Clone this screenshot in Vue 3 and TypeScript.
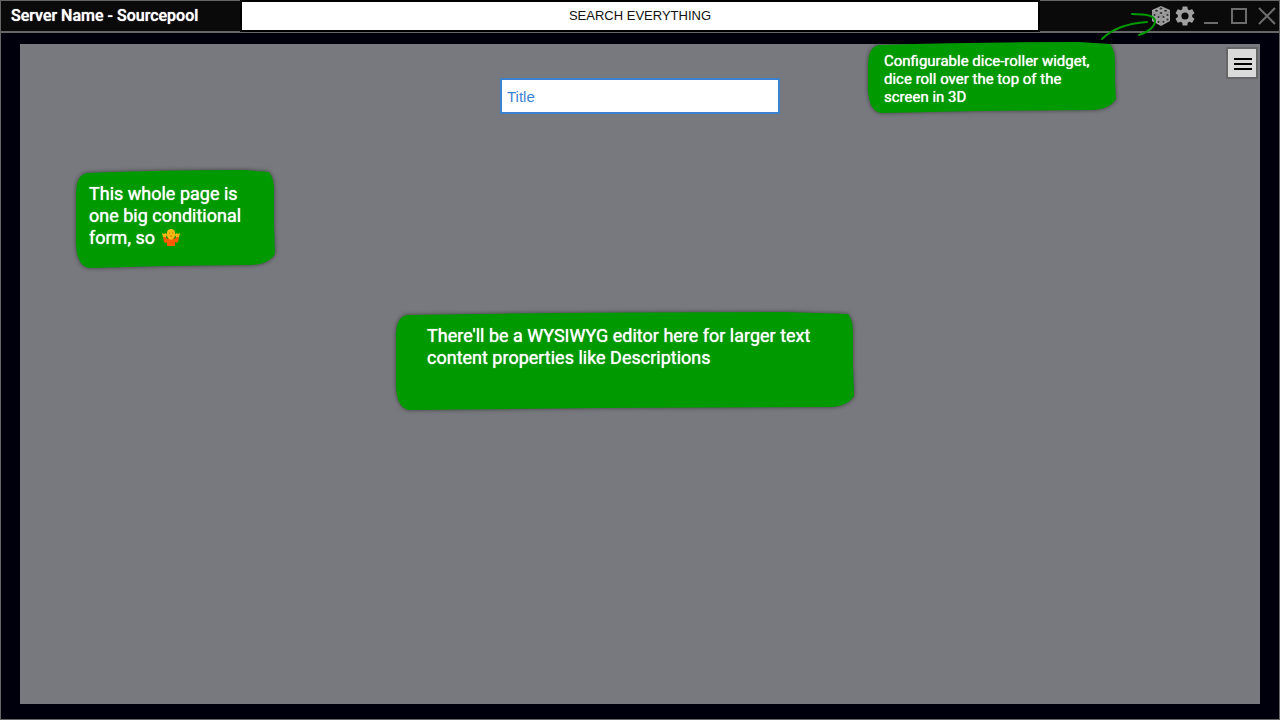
<script setup lang="ts">
import { ref } from 'vue'

interface Note {
  id: string
  text: string
  width: number
  height: number
  shrug?: boolean
}

const query = ref('')
const title = ref('')

const notes: Note[] = [
  { id: 'dice', text: 'Configurable dice-roller widget, dice roll over the top of the screen in 3D', width: 249, height: 71 },
  { id: 'form', text: 'This whole page is one big conditional form, so', width: 200, height: 98, shrug: true },
  { id: 'editor', text: "There'll be a WYSIWYG editor here for larger text content properties like Descriptions", width: 459, height: 98 },
]

// Hand-cut paper outline whose corners keep their size at any width.
function outline(w: number, h: number): string {
  return `M1 24 Q1 4 13 3 Q${w * 0.4} 0 ${w * 0.85} 0 L${w - 6} 2 Q${w - 1} 8 ${w - 1} 20 L${w - 1} ${h * 0.55} L${w} ${h - 14} Q${w - 7} ${h - 3} ${w - 25} ${h - 3} L${w * 0.45} ${h - 2} L16 ${h} Q2 ${h} 1 ${h - 24} Z`
}
</script>

<template>
  <div class="window">
    <header class="bar">
      <h1 class="name">Server Name - Sourcepool</h1>
      <input v-model="query" class="search" type="text" aria-label="Search everything" placeholder="SEARCH EVERYTHING" />
      <nav class="tools" aria-label="Window controls">
        <button class="tool" type="button" aria-label="Dice roller">
          <svg viewBox="0 0 20 20">
            <path d="M10 0 L19 4 V15 L10 20 L1 15 V4 Z" fill="#a0a0a0" />
            <path d="M1 6 L10 10 L19 6 M10 10 V19" fill="none" stroke="#8a8a8a" />
            <g fill="#333">
              <ellipse cx="10" cy="2.500" rx="1.500" ry="1" /><ellipse cx="5.500" cy="4.800" rx="1.500" ry="1" />
              <ellipse cx="10" cy="7" rx="1.500" ry="1" /><ellipse cx="14.500" cy="4.800" rx="1.500" ry="1" />
              <circle cx="3.500" cy="9" r="1.100" /><circle cx="7.500" cy="11" r="1.100" /><circle cx="3.500" cy="13.500" r="1.100" /><circle cx="7.500" cy="15.800" r="1.100" />
              <circle cx="16.500" cy="9" r="1.100" /><circle cx="12.500" cy="11" r="1.100" /><circle cx="16.500" cy="13.500" r="1.100" /><circle cx="12.500" cy="15.800" r="1.100" />
            </g>
          </svg>
        </button>
        <button class="tool" type="button" aria-label="Settings">
          <svg viewBox="2 2 20 20">
            <path fill="#a0a0a0" d="M19.140 12.940c.040-.300.060-.610.060-.940s-.020-.640-.070-.940l2.030-1.580c.180-.140.230-.410.120-.610l-1.920-3.320c-.120-.220-.370-.290-.590-.220l-2.390.960c-.500-.380-1.030-.700-1.620-.940L14.400 2.810c-.040-.240-.240-.410-.480-.410h-3.840c-.240 0-.430.170-.470.410L9.250 5.350c-.590.240-1.130.570-1.620.940L5.240 5.330c-.220-.080-.470 0-.590.220L2.740 8.870c-.120.210-.080.470.120.610l2.030 1.580c-.050.300-.090.630-.090.940s.020.640.070.940l-2.030 1.580c-.180.140-.230.410-.120.610l1.920 3.320c.120.220.370.290.590.220l2.390-.960c.500.380 1.030.700 1.620.940l.360 2.540c.050.240.240.410.480.410h3.840c.240 0 .440-.170.470-.410l.360-2.540c.590-.240 1.130-.560 1.620-.940l2.390.960c.220.080.470 0 .590-.220l1.920-3.320c.120-.220.070-.470-.120-.610zM12 15.600A3.600 3.600 0 1 1 12 8.400a3.600 3.600 0 0 1 0 7.200z" />
          </svg>
        </button>
        <button class="control" type="button" aria-label="Minimize">
          <svg viewBox="0 0 18 18"><path d="M2 16H16" /></svg>
        </button>
        <button class="control" type="button" aria-label="Maximize">
          <svg viewBox="0 0 18 18"><path d="M2 2H16V16H2Z" /></svg>
        </button>
        <button class="control" type="button" aria-label="Close">
          <svg viewBox="0 0 18 18"><path d="M1 1L17 17M17 1L1 17" /></svg>
        </button>
      </nav>
    </header>

    <main class="page">
      <input v-model="title" class="title" type="text" aria-label="Title" placeholder="Title" />
      <button class="menu" type="button" aria-label="Menu"><span></span><span></span><span></span></button>
    </main>

    <aside v-for="note in notes" :key="note.id" class="note" :class="note.id">
      <svg class="paper" :viewBox="`0 0 ${note.width} ${note.height}`" preserveAspectRatio="none" aria-hidden="true">
        <path :d="outline(note.width, note.height)" fill="#090" />
      </svg>
      <p>
        {{ note.text }}
        <svg v-if="note.shrug" class="shrug" viewBox="0 0 18 17" role="img" aria-label="Shrug">
          <path d="M1 8 H4 L5 10 L7 9 H11 L13 10 L14 8 H17 L16 13 L14 14 L13 13 V17 H5 V13 L4 14 L2 13 Z" fill="#ff5c00" />
          <path d="M0 4 L2 5 L4 4 L5 6 L4 8 H1 Z M18 4 L16 5 L14 4 L13 6 L14 8 H17 Z" fill="#fdb813" />
          <path d="M9 0 Q13 0 13 4 Q14 9 9 11 Q4 9 5 4 Q5 0 9 0Z" fill="#fdb813" />
          <path d="M7 4H8M10 4H11M8 7H10" stroke="#c97800" />
        </svg>
      </p>
    </aside>

    <svg class="arrow" viewBox="0 0 58 30" aria-hidden="true">
      <path d="M2 28 Q17 13 47 11 M32 3 C48 3 55 5 55 10 C55 15 49 21 39 24" />
    </svg>
  </div>
</template>

<style>
body {
  margin: 0;
}
</style>

<style scoped>
* {
  box-sizing: border-box;
}

.window {
  position: relative;
  display: flex;
  flex-direction: column;
  min-height: 100vh;
  border: 1px solid #666;
  background: #00000c;
  font-family: Roboto, "Liberation Sans", sans-serif;
}

.bar {
  display: grid;
  grid-template-columns: 239px 1fr 239px;
  height: 32px;
  border-bottom: 2px solid #666;
  background: #0a0a0a;
}

.name {
  align-self: center;
  margin: 0;
  padding: 0 0 2px 10px;
  color: #fff;
  font-size: 16px;
  font-weight: 500;
  line-height: 18px;
  text-shadow: 0 0 1px #fff;
  white-space: nowrap;
}

.search {
  width: 100%;
  height: 32px;
  margin: -1px 0 0;
  padding: 0 0 2px;
  border: 2px solid #000;
  border-radius: 0;
  outline: 0;
  background: #fff;
  color: #111;
  font: 13px "Liberation Sans", sans-serif;
  text-align: center;
  appearance: none;
}

.search::placeholder {
  color: #111;
  opacity: 1;
}

.tools {
  display: flex;
  align-items: center;
  justify-content: flex-end;
  padding: 0 3px 2px 0;
}

button {
  padding: 0;
  border: 0;
  background: none;
  cursor: pointer;
}

.tool {
  width: 20px;
  height: 20px;
  margin-right: 4px;
}

.control {
  width: 18px;
  height: 18px;
  margin-left: 10px;
}

.tool + .control {
  margin-left: 3px;
}

.tool svg,
.control svg {
  display: block;
  width: 100%;
  height: 100%;
}

.control path {
  fill: none;
  stroke: #6c6c6c;
  stroke-width: 2;
}

.page {
  position: relative;
  flex: 1;
  margin: 11px 19px 15px;
  padding-top: 34px;
  background: #78797e;
}

.title {
  display: block;
  width: 280px;
  height: 36px;
  margin: 0 auto;
  padding: 0 5px;
  border: 2px solid #3c82d2;
  outline: 0;
  background: #fff;
  color: #3c82d2;
  font: 15px "Liberation Sans", sans-serif;
}

.title::placeholder {
  color: #3c82d2;
  opacity: 1;
}

.menu {
  position: absolute;
  top: 3px;
  right: 2px;
  display: flex;
  flex-direction: column;
  align-items: center;
  justify-content: center;
  gap: 3px;
  width: 32px;
  height: 32px;
  padding-left: 2px;
  padding-top: 2px;
  border: 2px solid #666;
  background: #dadada;
}

.menu span {
  width: 18px;
  height: 2px;
  background: #000;
}

.note {
  position: absolute;
  color: #fff;
  font-size: 18px;
  font-weight: 400;
  line-height: 22px;
  text-shadow: 0 0 1px #fff;
}

.note p {
  position: relative;
  margin: 0;
}

.paper {
  position: absolute;
  inset: 0;
  width: 100%;
  height: 100%;
  overflow: visible;
  filter: drop-shadow(0 0 2px rgba(0, 0, 0, 0.5));
}

.dice {
  top: 41px;
  right: 163px;
  width: 249px;
  height: 71px;
  padding: 10px 17px;
  font-size: 15px;
  line-height: 18px;
}

.form {
  top: 169px;
  left: 74px;
  width: 200px;
  height: 98px;
  padding: 13px 14px;
}

.editor {
  top: 311px;
  left: 394px;
  width: 459px;
  height: 98px;
  padding: 13px 32px;
}

.shrug {
  width: 18px;
  height: 17px;
  margin-left: 3px;
  vertical-align: -2px;
}

.arrow {
  position: absolute;
  top: 10px;
  right: 121px;
  width: 58px;
  height: 30px;
}

.arrow path {
  fill: none;
  stroke: #090;
  stroke-width: 2;
  stroke-linecap: round;
}
</style>
